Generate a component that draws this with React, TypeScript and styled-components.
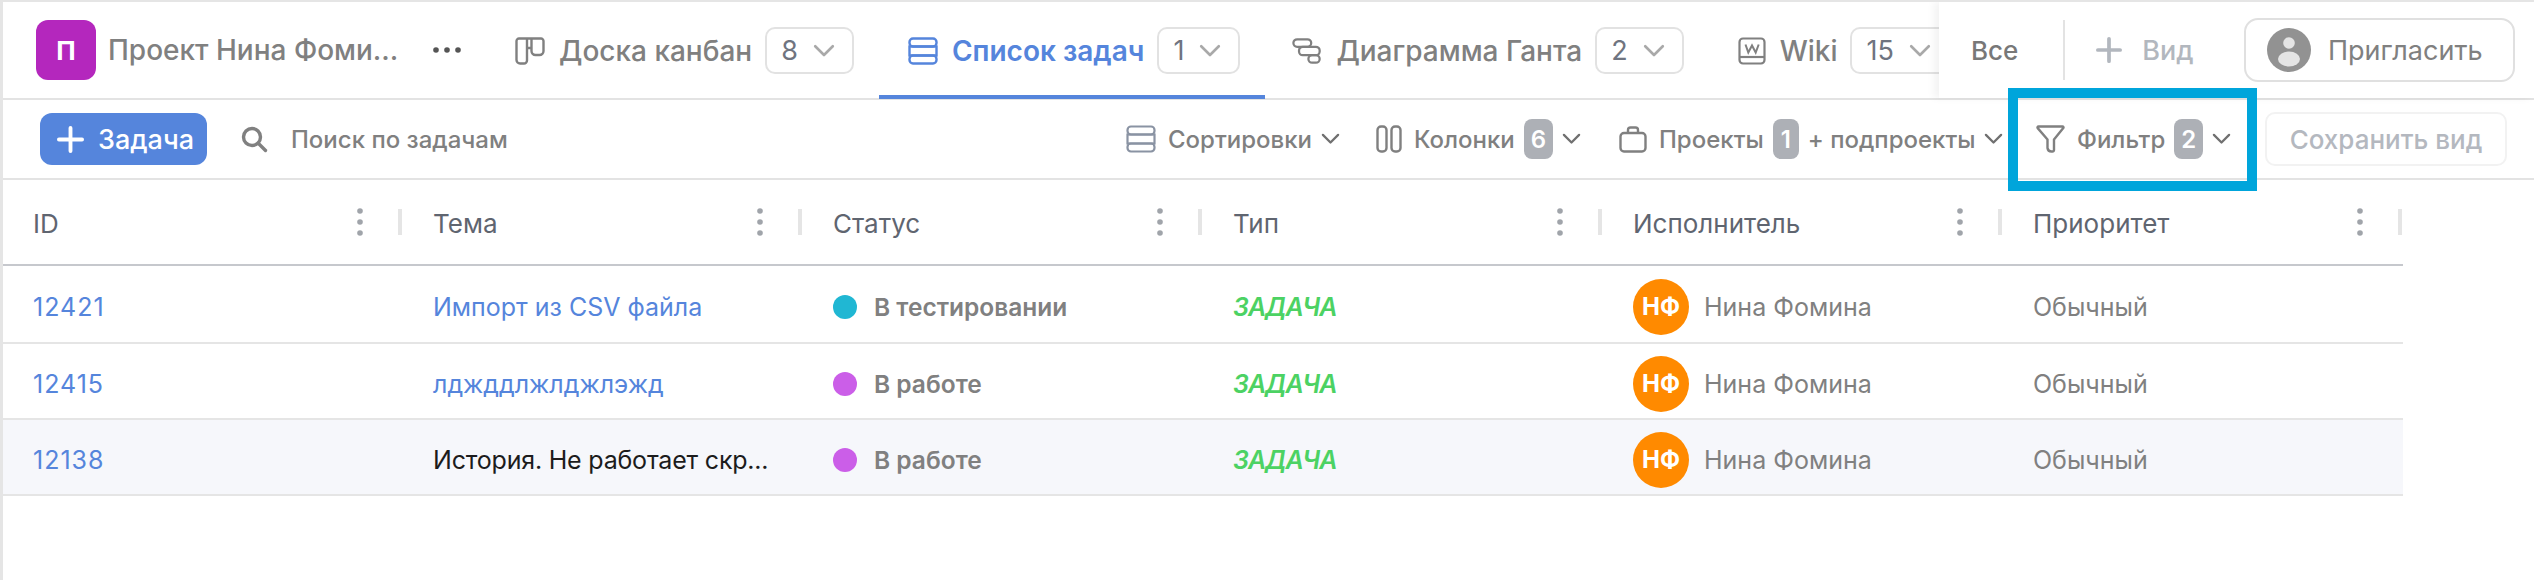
import styled, { createGlobalStyle } from 'styled-components'

const Global = createGlobalStyle`
html, body { margin: 0; padding: 0; background: #fff; }
body { font-family: Inter, "Noto Sans", sans-serif; -webkit-font-smoothing: antialiased; }
* { box-sizing: border-box; }
`

const tabs = [
  { title: 'Доска канбан', count: '8', icon: 'board' },
  { title: 'Список задач', count: '1', icon: 'list', active: true },
  { title: 'Диаграмма Ганта', count: '2', icon: 'gantt' },
  { title: 'Wiki', count: '15', icon: 'wiki' },
]

const columns = ['ID', 'Тема', 'Статус', 'Тип', 'Исполнитель', 'Приоритет']

const rows = [
  { id: '12421', topic: 'Импорт из CSV файла', status: 'В тестировании', dot: '#20b7d3' },
  { id: '12415', topic: 'лджддлжлджлэжд', status: 'В работе', dot: '#cb5ee8' },
  { id: '12138', topic: 'История. Не работает скр...', status: 'В работе', dot: '#cb5ee8', plain: true },
]

function BoardIcon() {
  return (
    <svg width="30" height="28" viewBox="0 0 30 28" fill="none" stroke="currentColor" strokeWidth="2.4">
      <path d="M4 1.5h22a2.5 2.5 0 0 1 2.5 2.5v10a4 4 0 0 1-4 4h-4a4 4 0 0 1-4-4V1.5M12 1.5v22a3 3 0 0 1-3 3H5a3.5 3.5 0 0 1-3.5-3.5V4A2.5 2.5 0 0 1 4 1.5M12 11h4.500" />
    </svg>
  )
}

function ListIcon() {
  return (
    <svg width="30" height="28" viewBox="0 0 30 28" fill="none" stroke="currentColor" strokeWidth="2.4">
      <rect x="1.500" y="1.500" width="27" height="8" rx="3.500" />
      <rect x="1.500" y="9.500" width="27" height="9" rx="0" />
      <rect x="1.500" y="18.500" width="27" height="8" rx="3.500" />
    </svg>
  )
}

function GanttIcon() {
  return (
    <GanttSvg width="30" height="28" viewBox="0 0 32 28" fill="none" stroke="currentColor" strokeWidth="2.4">
      <rect x="1.500" y="1.500" width="19" height="8" rx="4" />
      <rect x="7.500" y="9.500" width="22" height="9" rx="4" />
      <rect x="17.500" y="18.500" width="12" height="8" rx="4" />
    </GanttSvg>
  )
}

function WikiIcon() {
  return (
    <svg width="28" height="28" viewBox="0 0 28 28" fill="none" stroke="currentColor" strokeWidth="2.2">
      <rect x="1.500" y="1.500" width="25" height="25" rx="3.500" />
      <path d="M1.500 20h25" />
      <path d="M7.500 7.500l2.800 8 3.700-7 3.700 7 3-8" strokeWidth="2" />
    </svg>
  )
}

const tabIcons: Record<string, () => React.ReactElement> = {
  board: BoardIcon,
  list: ListIcon,
  gantt: GanttIcon,
  wiki: WikiIcon,
}

function Chevron({ size = 22 }: { size?: number }) {
  return (
    <svg width={size} height={size * 0.6} viewBox="0 0 20 12" fill="none" stroke="currentColor" strokeWidth="2.4" strokeLinecap="round" strokeLinejoin="round">
      <path d="M2 2l8 8 8-8" />
    </svg>
  )
}

function Plus({ size }: { size: number }) {
  return (
    <svg width={size} height={size} viewBox="0 0 28 28" fill="none" stroke="currentColor" strokeWidth="4" strokeLinecap="round">
      <path d="M14 2v24M2 14h24" />
    </svg>
  )
}

function App() {
  return (
    <Page>
      <Global />
      <TopBar>
        <TabStrip>
          <Logo>П</Logo>
          <ProjectName>Проект Нина Фоми...</ProjectName>
          <MoreDots>
            <svg width="28" height="6" viewBox="0 0 28 6" fill="#555">
              <circle cx="3" cy="3" r="2.800" />
              <circle cx="14" cy="3" r="2.800" />
              <circle cx="25" cy="3" r="2.800" />
            </svg>
          </MoreDots>
          {tabs.map(tab => {
            const Icon = tabIcons[tab.icon]
            return (
              <Tab key={tab.title} $active={tab.active}>
                <Icon />
                <TabTitle $active={tab.active}>{tab.title}</TabTitle>
                <CountBox>
                  {tab.count}
                  <ChevronWrap><Chevron /></ChevronWrap>
                </CountBox>
              </Tab>
            )
          })}
        </TabStrip>
        <ViewPanel>
          <AllViews>Все</AllViews>
          <PanelDivider />
          <AddView>
            <Plus size={26} />
            Вид
          </AddView>
          <InviteButton>
            <svg width="44" height="44" viewBox="0 0 44 44">
              <circle cx="22" cy="22" r="22" fill="#929292" />
              <circle cx="22" cy="15" r="5.800" fill="#e4e4e4" />
              <ellipse cx="22" cy="31" rx="11" ry="7.500" fill="#e4e4e4" />
            </svg>
            Пригласить
          </InviteButton>
        </ViewPanel>
      </TopBar>

      <Toolbar>
        <AddTask>
          <Plus size={27} />
          Задача
        </AddTask>
        <SearchBox>
          <svg width="27" height="27" viewBox="0 0 27 27" fill="none" stroke="#808080" strokeWidth="3.400" strokeLinecap="round">
            <circle cx="11" cy="11" r="8.500" />
            <path d="M17.500 17.500l7 7" />
          </svg>
          Поиск по задачам
        </SearchBox>
        <ToolGroup>
          <ToolItem $width={250}>
            <SortIcon width="30" height="28" viewBox="0 0 30 28" fill="none" stroke="currentColor" strokeWidth="2.200">
              <rect x="1.500" y="1.500" width="27" height="8" rx="3.500" />
              <rect x="1.500" y="9.500" width="27" height="9" />
              <rect x="1.500" y="18.500" width="27" height="8" rx="3.500" />
            </SortIcon>
            <span>Сортировки</span>
            <ChevronSmall><Chevron size={19} /></ChevronSmall>
          </ToolItem>
          <ToolItem $width={243}>
            <svg width="26" height="28" viewBox="0 0 26 28" fill="none" stroke="currentColor" strokeWidth="2.400">
              <rect x="1.500" y="1.500" width="9" height="25" rx="3.500" />
              <rect x="15.500" y="1.500" width="9" height="25" rx="3.500" />
            </svg>
            <span>Колонки</span>
            <Counter>6</Counter>
            <ChevronSmall><Chevron size={19} /></ChevronSmall>
          </ToolItem>
          <ToolItem $width={417}>
            <svg width="28" height="27" viewBox="0 0 28 27" fill="none" stroke="currentColor" strokeWidth="2.400">
              <rect x="1.500" y="7" width="25" height="18.500" rx="3.500" />
              <path d="M9 7V4a2.500 2.500 0 0 1 2.500-2.500h5A2.500 2.500 0 0 1 19 4v3" />
            </svg>
            <span>Проекты</span>
            <Counter>1</Counter>
            <span>+ подпроекты</span>
            <ChevronSmall><Chevron size={19} /></ChevronSmall>
          </ToolItem>
          <ToolItem $width={229}>
            <svg width="29" height="28" viewBox="0 0 29 28" fill="none" stroke="currentColor" strokeWidth="2.400" strokeLinejoin="round">
              <path d="M2.500 1.500h24a1 1 0 0 1 .800 1.600L18 14.500v10.500a1.500 1.500 0 0 1-1.500 1.500h-1a4 4 0 0 1-4-3.500v-8.500L1.700 3.100a1 1 0 0 1 .800-1.600z" />
            </svg>
            <span>Фильтр</span>
            <Counter>2</Counter>
            <ChevronSmall><Chevron size={19} /></ChevronSmall>
          </ToolItem>
          <SaveView>Сохранить вид</SaveView>
        </ToolGroup>
        <Highlight />
      </Toolbar>

      <Table>
        <HeaderRow>
          {columns.map(col => (
            <HeaderCell key={col}>
              <HeaderTitle>{col}</HeaderTitle>
              <CellTools>
                <svg width="6" height="28" viewBox="0 0 6 28" fill="#a0a4aa">
                  <circle cx="3" cy="3" r="2.800" />
                  <circle cx="3" cy="14" r="2.800" />
                  <circle cx="3" cy="25" r="2.800" />
                </svg>
                <ColumnSeparator />
              </CellTools>
            </HeaderCell>
          ))}
        </HeaderRow>
        {rows.map(row => (
          <Row key={row.id} $hover={row.plain}>
            <Cell><IdLink>{row.id}</IdLink></Cell>
            <Cell>
              {row.plain ? <Topic>{row.topic}</Topic> : <TaskLink>{row.topic}</TaskLink>}
            </Cell>
            <Cell>
              <StatusDot $color={row.dot} />
              <StatusName>{row.status}</StatusName>
            </Cell>
            <Cell><TypeLabel>ЗАДАЧА</TypeLabel></Cell>
            <Cell>
              <Avatar>НФ</Avatar>
              <Muted>Нина Фомина</Muted>
            </Cell>
            <Cell><Muted>Обычный</Muted></Cell>
          </Row>
        ))}
      </Table>
    </Page>
  )
}

const Page = styled.div`
position: relative;
min-height: 100vh;
border-left: 3px solid #e5e5e5;
border-top: 2px solid #e5e5e5;
background: #fff;
overflow: hidden;
`
const TopBar = styled.div`
display: flex;
height: 96px;
border-bottom: 2px solid #e3e3e3;
box-sizing: content-box;
`
const TabStrip = styled.div`
flex: 1;
min-width: 0;
display: flex;
align-items: center;
padding-left: 33px;
white-space: nowrap;
overflow-x: clip;
overflow-y: visible;
`
const Logo = styled.div`
flex-shrink: 0;
width: 60px;
height: 60px;
border-radius: 12px;
background: #b427bd;
color: #fff;
font-size: 26px;
font-weight: 700;
display: flex;
align-items: center;
justify-content: center;
`
const ProjectName = styled.div`
flex-shrink: 0;
width: 293px;
margin-left: 12px;
font-size: 28px;
font-weight: 500;
color: #808080;
`
const MoreDots = styled.div`
flex-shrink: 0;
width: 53px;
display: flex;
margin-left: 32px;
`
const Tab = styled.div<{ $active?: boolean }>`
flex-shrink: 0;
height: 97px;
margin-bottom: -1px;
display: flex;
align-items: center;
padding: 4px 25px 0 29px;
color: ${props => props.$active ? '#5585dc' : '#808080'};
border-bottom: 4px solid ${props => props.$active ? '#5585dc' : 'transparent'};
position: relative;
`
const GanttSvg = styled.svg`
margin-left: -2px;
`
const TabTitle = styled.span<{ $active?: boolean }>`
margin-left: 14px;
font-size: 28px;
font-weight: ${props => props.$active ? 600 : 500};
`
const CountBox = styled.div`
margin-left: 13px;
height: 47px;
padding: 0 17px 0 14px;
display: flex;
align-items: center;
border: 2px solid #e2e2e2;
border-radius: 10px;
font-size: 27px;
color: #6f7480;
font-weight: 400;
`
const ChevronWrap = styled.span`
display: flex;
margin-left: 15px;
color: #a9a9a9;
`
const ViewPanel = styled.div`
flex-shrink: 0;
width: 595px;
display: flex;
align-items: center;
padding: 0 19px 0 32px;
background: #fff;
box-shadow: -5px 0 8px rgba(0, 0, 0, 0.05);
position: relative;
`
const AllViews = styled.span`
font-size: 26px;
font-weight: 500;
color: #787878;
`
const PanelDivider = styled.div`
width: 2px;
height: 60px;
margin-left: 45px;
background: #e3e3e3;
`
const AddView = styled.div`
display: flex;
align-items: center;
gap: 20px;
margin-left: 31px;
font-size: 27px;
font-weight: 500;
color: #b2b7be;
`
const InviteButton = styled.div`
display: flex;
align-items: center;
gap: 17px;
width: 271px;
height: 64px;
margin-left: auto;
padding-left: 21px;
border: 2px solid #e0e0e0;
border-radius: 14px;
font-size: 27px;
color: #808080;
`
const Toolbar = styled.div`
display: flex;
align-items: center;
height: 78px;
padding: 0 27px 0 37px;
border-bottom: 2px solid #e3e3e3;
box-sizing: content-box;
`
const AddTask = styled.div`
display: flex;
align-items: center;
gap: 14px;
width: 167px;
height: 52px;
padding-left: 17px;
border-radius: 12px;
background: #5585dc;
color: #fff;
font-size: 27px;
font-weight: 500;
`
const SearchBox = styled.div`
display: flex;
align-items: center;
gap: 23px;
margin-left: 34px;
font-size: 24px;
font-weight: 500;
color: #808080;
`
const ToolGroup = styled.div`
margin-left: auto;
display: flex;
align-items: center;
font-size: 24px;
font-weight: 500;
color: #808080;
`
const ToolItem = styled.div<{ $width: number }>`
width: ${props => props.$width}px;
display: flex;
align-items: center;
gap: 9px;
white-space: nowrap;
& > svg:first-child { margin-right: 3px; }
`
const SortIcon = styled.svg`
color: #8a93a3;
`
const ChevronSmall = styled.span`
display: flex;
color: #707070;
`
const Counter = styled.span`
min-width: 26px;
height: 40px;
padding: 0 7px;
display: flex;
align-items: center;
justify-content: center;
border-radius: 8px;
background: #adb0b6;
color: #fff;
font-size: 24px;
font-weight: 600;
`
const SaveView = styled.div`
width: 242px;
height: 54px;
display: flex;
align-items: center;
justify-content: center;
border: 2px solid #f2f2f2;
border-radius: 10px;
font-size: 26px;
color: #b4b8bf;
`
const Highlight = styled.div`
position: absolute;
left: 2005px;
top: 86px;
width: 249px;
height: 103px;
border: 10px solid #00a5db;
`
const Table = styled.div`
width: 2400px;
`
const HeaderRow = styled.div`
display: grid;
grid-template-columns: repeat(6, 400px);
height: 84px;
border-bottom: 2px solid #c6c8cd;
box-sizing: content-box;
`
const HeaderCell = styled.div`
display: flex;
align-items: center;
justify-content: space-between;
padding-left: 30px;
font-size: 26px;
color: #5f6570;
`
const HeaderTitle = styled.span`
padding-top: 3px;
`
const CellTools = styled.div`
display: flex;
align-items: center;
gap: 35px;
margin-right: 1px;
`
const ColumnSeparator = styled.span`
width: 4px;
height: 26px;
background: #e5e5e5;
`
const Row = styled.div<{ $hover?: boolean }>`
display: grid;
grid-template-columns: repeat(6, 400px);
height: 74px;
border-bottom: 2px solid #e5e5e5;
box-sizing: content-box;
background: ${props => props.$hover ? '#f6f7fb' : '#fff'};
&:nth-child(2) { height: 76px; }
`
const Cell = styled.div`
display: flex;
align-items: center;
min-width: 0;
padding: 5px 0 0 30px;
font-size: 25px;
`
const TaskLink = styled.span`
color: #5585dc;
`
const IdLink = styled(TaskLink)`
letter-spacing: 1px;
`
const Topic = styled.span`
color: #1c1c1c;
letter-spacing: -0.2px;
`
const StatusDot = styled.span<{ $color: string }>`
width: 24px;
height: 24px;
border-radius: 50%;
background: ${props => props.$color};
`
const StatusName = styled.span`
margin-left: 17px;
color: #808080;
font-size: 24.500px;
font-weight: 600;
`
const TypeLabel = styled.span`
color: #4cd263;
font-size: 25px;
font-weight: 600;
font-style: italic;
letter-spacing: -1px;
`
const Avatar = styled.span`
width: 56px;
height: 56px;
border-radius: 50%;
background: #ff8a00;
color: #fff;
font-size: 24px;
font-weight: 700;
display: flex;
align-items: center;
justify-content: center;
`
const Muted = styled.span`
color: #808080;
${Avatar} + & { margin-left: 15px; }
`

export default App
